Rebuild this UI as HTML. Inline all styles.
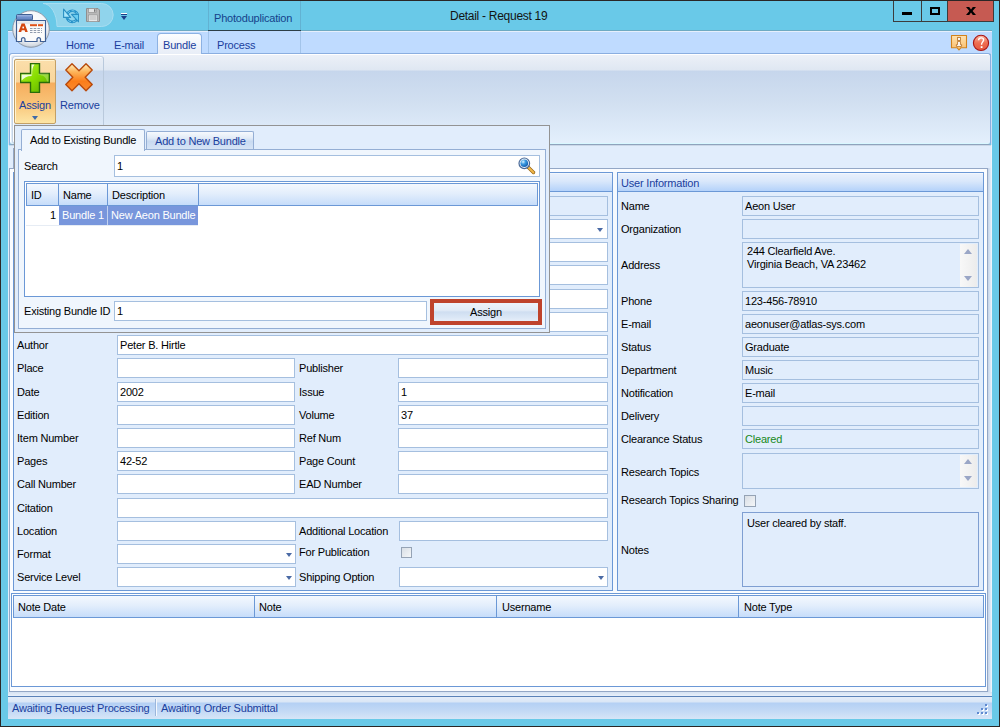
<!DOCTYPE html>
<html><head><meta charset="utf-8"><style>
*{box-sizing:border-box;margin:0;padding:0}
html,body{width:1000px;height:727px;overflow:hidden;background:#2a2626}
body{position:relative;font-family:"Liberation Sans",sans-serif;font-size:11px;letter-spacing:-0.2px;color:#000}
.a{position:absolute}
.t{position:absolute;white-space:nowrap;line-height:13px}
.bl{color:#1a3e9e}
.f{position:absolute;background:#fff;border:1px solid #a5bfdf}
.r{position:absolute;background:#e1edfc;border:1px solid #a5bfdf}
.dd{position:absolute;width:0;height:0;border-left:3.5px solid transparent;border-right:3.5px solid transparent;border-top:4px solid #4a6aa5}
.ck{position:absolute;width:11px;height:11px;border:1px solid #95a3b5;background:linear-gradient(135deg,#d9dfe6,#f4f6f8)}
.gh{position:absolute;background:linear-gradient(#f3f8fe,#dbe9fb 45%,#c0d9f9);border:1px solid #6b98d6}
</style></head><body>
<div class="a" style="left:1px;top:1px;width:998px;height:725px;background:#69c9e8"></div>
<div class="t" style="left:450px;top:10px;font-size:12px;letter-spacing:-0.28px;color:#141414">Detail - Request 19</div>
<div class="a" style="left:893px;top:1px;width:29px;height:21px;border:1px solid #3c3c3c;border-top:0;background:#69c9e8"></div>
<div class="a" style="left:922px;top:1px;width:26px;height:21px;border:1px solid #3c3c3c;border-top:0;border-left:0;background:#69c9e8"></div>
<div class="a" style="left:947px;top:1px;width:47px;height:21px;border:1px solid #3c3c3c;border-top:0;background:#c65a52"></div>
<div class="a" style="left:902px;top:12px;width:10px;height:3px;background:#000"></div>
<div class="a" style="left:930px;top:7px;width:10px;height:8px;border:2px solid #000"></div>
<svg class="a" style="left:966px;top:7px" width="10" height="8" viewBox="0 0 10 8"><path d="M0 0H3.2L5 2.6L6.8 0H10L6.6 4L10 8H6.8L5 5.4L3.2 8H0L3.4 4Z" fill="#000"/></svg>
<div class="a" style="left:8px;top:31px;width:984px;height:23px;background:#bfdbff"></div>
<div class="a" style="left:8px;top:30px;width:984px;height:1px;background:#6eaac2"></div>
<div class="a" style="left:8px;top:31px;width:984px;height:1px;background:#e6effc"></div>
<div class="a" style="left:208px;top:1px;width:93px;height:52px;background:linear-gradient(#69c9e8 0,#69c9e8 29px,#bfdbff 29px);border-left:1px solid #62b2d2;border-right:1px solid #62b2d2"></div>
<div class="a" style="left:208px;top:30px;width:93px;height:1px;background:#2c3f48"></div>
<div class="a" style="left:208px;top:31px;width:1px;height:22px;background:#a3c4ea"></div>
<div class="a" style="left:300px;top:31px;width:1px;height:22px;background:#a3c4ea"></div>
<div class="t" style="left:214px;top:12px;color:#15428b">Photoduplication</div>
<div class="t bl" style="left:66px;top:39px;">Home</div>
<div class="t bl" style="left:114px;top:39px;">E-mail</div>
<div class="t bl" style="left:217px;top:39px;">Process</div>
<div class="a" style="left:8px;top:53px;width:1px;height:92px;background:#cfe0f6"></div>
<div class="a" style="left:991px;top:53px;width:1px;height:92px;background:#cfe0f6"></div>
<div class="a" style="left:9px;top:53px;width:982px;height:92px;background:linear-gradient(#edf1f8 0,#dfe7f2 16px,#c6d6ec 17px,#d2e0f1 50px,#e3effc 88px);border:1px solid #8aaee0;border-bottom-color:#8ea3bd;border-radius:3px;box-shadow:inset 0 -1px 0 #d8f8ff,inset 1px 1px 0 #fff"></div>
<div class="a" style="left:157px;top:33px;width:45px;height:21px;background:linear-gradient(#fdfeff,#eef2f9 60%,#e8eef7);border:1px solid #8db2e3;border-bottom:0;border-radius:4px 4px 0 0"></div>
<div class="t bl" style="left:163px;top:39px;">Bundle</div>
<div class="a" style="left:12px;top:56px;width:92px;height:88px;border:1px solid #c4d3e4;border-right-color:#b9c9dc;border-radius:3px;box-shadow:inset 1px 1px 0 #fff"></div>
<div class="a" style="left:14px;top:59px;width:42px;height:65px;background:linear-gradient(#fbdeaa 0,#f9d69c 22px,#f6ad5e 23px,#f8c275 42px,#fde7a8 64px);border:1px solid #c3a066;border-radius:2px;box-shadow:inset 1px 1px 0 #fff3d0"></div>
<svg class="a" style="left:20px;top:63px" width="30" height="30" viewBox="0 0 30 30">
<defs><linearGradient id="pg" x1="0" y1="0" x2="1" y2="1"><stop offset="0" stop-color="#b8f030"/><stop offset="0.5" stop-color="#86dc00"/><stop offset="1" stop-color="#58a800"/></linearGradient></defs>
<path d="M10.5 0.5H19.5V10.5H29.5V19.5H19.5V29.5H10.5V19.5H0.5V10.5H10.5Z" fill="url(#pg)" stroke="#2a6c0a" stroke-width="1.4"/>
<path d="M11.6 1.6H14.5C12.5 4 12 8 12.2 11.6H11.6Z M1.6 11.6H11.6V13C7 13 4 15 1.6 17.5Z" fill="#fff" opacity="0.85"/><path d="M18.4 10.6H28.4V18.4H27 C26 14 23 12 18.4 12Z" fill="#fff" opacity="0.25"/>
</svg>
<svg class="a" style="left:65px;top:63px" width="28" height="29" viewBox="0 0 28 29">
<defs><linearGradient id="xg" x1="0" y1="0" x2="0" y2="1"><stop offset="0" stop-color="#fff1c0"/><stop offset="0.3" stop-color="#fdb45a"/><stop offset="0.65" stop-color="#fb7d1a"/><stop offset="1" stop-color="#f98a30"/></linearGradient></defs>
<path d="M7 0.8L14 7.8L21 0.8L27.2 7L20.2 14.2L27.2 21.4L21 27.8L14 20.8L7 27.8L0.8 21.4L7.8 14.2L0.8 7Z" fill="url(#xg)" stroke="#b84a0c" stroke-width="1.4" stroke-linejoin="round"/>
</svg>
<div class="t bl" style="left:19px;top:99px;">Assign</div>
<div class="t bl" style="left:60px;top:99px;">Remove</div>
<div class="dd" style="left:32px;top:116px;border-top-color:#3f6aa8"></div>
<div class="a" style="left:8px;top:145px;width:984px;height:574px;background:#e1edfc"></div>
<div class="a" style="left:991px;top:145px;width:1px;height:574px;background:#eef4fc"></div>
<div class="a" style="left:9px;top:145px;width:982px;height:1px;background:#cbd8e8"></div>
<svg class="a" style="left:950px;top:34px" width="18" height="17" viewBox="0 0 18 17">
<defs><linearGradient id="ig" x1="0" y1="0" x2="0" y2="1"><stop offset="0" stop-color="#ffe2b0"/><stop offset="1" stop-color="#f9bd6a"/></linearGradient></defs>
<path d="M1.5 1.5H16.5V13.7H11L9 16L7 13.7H1.5Z" fill="url(#ig)" stroke="#d2821c" stroke-width="1.1" stroke-linejoin="round"/>
<rect x="7.6" y="3.4" width="2.8" height="3" fill="#fff" stroke="#b8742a" stroke-width="0.9"/>
<path d="M7.6 7.4H10.4V10.6H11.6V12.4H6.4V10.6H7.6Z" fill="#fff" stroke="#b8742a" stroke-width="0.9"/>
</svg>
<svg class="a" style="left:972px;top:34px" width="18" height="18" viewBox="0 0 18 18">
<defs><linearGradient id="hg" x1="0" y1="0" x2="0" y2="1"><stop offset="0" stop-color="#fcb8a4"/><stop offset="0.5" stop-color="#ee6e52"/><stop offset="1" stop-color="#e4553c"/></linearGradient></defs>
<circle cx="9" cy="8.9" r="7.6" fill="url(#hg)" stroke="#a81414" stroke-width="1.1"/>
<path d="M6.6 6.3C6.6 4.6 7.7 3.9 9.2 3.9C10.7 3.9 11.6 4.8 11.6 6C11.6 7.6 9.6 8.2 9.6 10.2V10.8" fill="none" stroke="#fff" stroke-width="1.4"/>
<rect x="8.7" y="12.2" width="1.8" height="1.8" fill="#fff"/>
</svg>
<svg class="a" style="left:0;top:0" width="130" height="31" viewBox="0 0 130 31">
<path d="M43 3.5H101.7A11.5 11.5 0 0 1 101.7 26.5H57A14 23 0 0 0 43 3.5Z" fill="#90d4ec" stroke="#a6ddf1" stroke-width="1"/>
</svg>
<svg class="a" style="left:63px;top:8px" width="16" height="16" viewBox="0 0 16 16">
<defs><linearGradient id="rg" x1="0" y1="0" x2="1" y2="1"><stop offset="0" stop-color="#7fd6f6"/><stop offset="1" stop-color="#1a86c0"/></linearGradient></defs>
<circle cx="9.3" cy="8.3" r="5.6" fill="none" stroke="#2590c8" stroke-width="2.6"/>
<circle cx="9.3" cy="8.3" r="5.6" fill="none" stroke="#8edcf8" stroke-width="0.8" stroke-dasharray="3 2"/>
<path d="M0.6 1.2V9.4H7.6Z" fill="#a8e6fb" stroke="#2a90c4" stroke-width="1.1" stroke-linejoin="round"/>
<path d="M8.6 6.4H15.6V13.8Z" fill="#6acdf2" stroke="#2a90c4" stroke-width="1.1" stroke-linejoin="round"/>
</svg>
<svg class="a" style="left:86px;top:8px" width="14" height="14" viewBox="0 0 14 14">
<path d="M0.5 0.5H12L13.5 2V13.5H0.5Z" fill="#b9b9b9" stroke="#8f8f8f"/>
<rect x="2.5" y="0.5" width="8" height="4" fill="#e4e4e4" stroke="#8a8a8a" stroke-width="0.6"/>
<rect x="8" y="1.2" width="1.5" height="2.6" fill="#777"/>
<rect x="2.5" y="7" width="9" height="6.5" fill="#e8e8e8" stroke="#8f8f8f" stroke-width="0.6"/>
<path d="M3.5 9H10.5M3.5 11H10.5" stroke="#aaa" stroke-width="0.8"/>
</svg>
<div class="a" style="left:121px;top:13px;width:6px;height:1px;background:#fff"></div>
<div class="a" style="left:121px;top:14px;width:6px;height:1px;background:#1b3f8a"></div>
<div class="dd" style="left:121px;top:16px;border-top:4px solid #1b3f8a"></div>
<svg class="a" style="left:11px;top:9px" width="40" height="40" viewBox="0 0 40 40">
<defs><radialGradient id="ag" cx="0.5" cy="0.4" r="0.6"><stop offset="0" stop-color="#ffffff"/><stop offset="0.7" stop-color="#f4f6f9"/><stop offset="0.92" stop-color="#d4dae2"/><stop offset="1" stop-color="#b2bcc8"/></radialGradient>
<linearGradient id="tg" x1="0" y1="0" x2="0" y2="1"><stop offset="0" stop-color="#a8bde6"/><stop offset="0.5" stop-color="#7090cc"/><stop offset="1" stop-color="#6383c0"/></linearGradient></defs>
<circle cx="20" cy="20" r="18.3" fill="url(#ag)" stroke="#8f9bab" stroke-width="1"/>
<rect x="5.5" y="5.5" width="16" height="5.5" rx="1" fill="url(#tg)" stroke="#3e5f94" stroke-width="1"/>
<path d="M5.5 11.5H34.5V32.5H29.5V30A1.8 1.8 0 0 0 26 30V32.5H14V30A1.8 1.8 0 0 0 10.5 30V32.5H5.5Z" fill="#fbfbfb" stroke="#3e5f94" stroke-width="1.2"/>
<rect x="6.2" y="12.2" width="27.6" height="3" fill="#e6e9ee"/>
<path d="M7.5 23L10.6 14.6H13.6L16.8 23H14.2L13.6 21.2H10.8L10.2 23Z" fill="#d44812"/><rect x="11.4" y="17.6" width="1.6" height="1.8" fill="#fbfbfb"/>
<rect x="19" y="15.2" width="7" height="2" fill="#e05218"/><rect x="27" y="15.2" width="5" height="2" fill="#e05218"/>
<path d="M19 19.5H31M19 21.5H31M19 23.5H31" stroke="#8f9aac" stroke-width="1.1" stroke-dasharray="2.5 1.2"/>
</svg>
<div class="a" style="left:9px;top:168px;width:979px;height:524px;border:1px solid #93a7c6;background:#fafcff"></div>
<div class="a" style="left:988px;top:168px;width:3px;height:524px;background:linear-gradient(90deg,#c5d3e6,#e1edfc)"></div>
<div class="a" style="left:13px;top:148px;width:60px;height:21px;border:1px solid #93a7c6;border-bottom:0;background:linear-gradient(#fbfdff,#e9f1fb)"></div>
<div class="a" style="left:13px;top:172px;width:600px;height:419px;border:1px solid #6b98d6;background:#e1edfc"></div>
<div class="a" style="left:14px;top:173px;width:598px;height:19px;background:linear-gradient(#fdfeff 0,#e8f0fc 1px,#dae8fb 45%,#b4d2fa);border-bottom:1px solid #6b98d6"></div>
<div class="a" style="left:617px;top:172px;width:367px;height:419px;border:1px solid #6b98d6;background:#e1edfc"></div>
<div class="a" style="left:618px;top:173px;width:365px;height:19px;background:linear-gradient(#fdfeff 0,#e8f0fc 1px,#dae8fb 45%,#b4d2fa);border-bottom:1px solid #6b98d6"></div>
<div class="a" style="left:613px;top:172px;width:4px;height:419px;background:#f5f9fe"></div>
<div class="t bl" style="left:621px;top:177px;">User Information</div>
<div class="r" style="left:117px;top:196px;width:491px;height:20px"></div>
<div class="f" style="left:117px;top:219px;width:491px;height:20px"></div>
<div class="dd" style="left:597px;top:228px"></div>
<div class="f" style="left:117px;top:242px;width:491px;height:20px"></div>
<div class="f" style="left:117px;top:265px;width:491px;height:20px"></div>
<div class="f" style="left:117px;top:289px;width:491px;height:20px"></div>
<div class="f" style="left:117px;top:312px;width:491px;height:20px"></div>
<div class="t" style="left:17px;top:339px;">Author</div>
<div class="f" style="left:117px;top:335px;width:491px;height:20px"></div>
<div class="t" style="left:120px;top:339px;">Peter B. Hirtle</div>
<div class="t" style="left:17px;top:362px;">Place</div>
<div class="f" style="left:117px;top:358px;width:178px;height:20px"></div>
<div class="t" style="left:299px;top:362px;">Publisher</div>
<div class="f" style="left:398px;top:358px;width:210px;height:20px"></div>
<div class="t" style="left:17px;top:386px;">Date</div>
<div class="f" style="left:117px;top:382px;width:178px;height:20px"></div>
<div class="t" style="left:120px;top:386px;">2002</div>
<div class="t" style="left:299px;top:386px;">Issue</div>
<div class="f" style="left:398px;top:382px;width:210px;height:20px"></div>
<div class="t" style="left:401px;top:386px;">1</div>
<div class="t" style="left:17px;top:409px;">Edition</div>
<div class="f" style="left:117px;top:405px;width:178px;height:20px"></div>
<div class="t" style="left:299px;top:409px;">Volume</div>
<div class="f" style="left:398px;top:405px;width:210px;height:20px"></div>
<div class="t" style="left:401px;top:409px;">37</div>
<div class="t" style="left:17px;top:432px;">Item Number</div>
<div class="f" style="left:117px;top:428px;width:178px;height:20px"></div>
<div class="t" style="left:299px;top:432px;">Ref Num</div>
<div class="f" style="left:398px;top:428px;width:210px;height:20px"></div>
<div class="t" style="left:17px;top:455px;">Pages</div>
<div class="f" style="left:117px;top:451px;width:178px;height:20px"></div>
<div class="t" style="left:120px;top:455px;">42-52</div>
<div class="t" style="left:299px;top:455px;">Page Count</div>
<div class="f" style="left:398px;top:451px;width:210px;height:20px"></div>
<div class="t" style="left:17px;top:478px;">Call Number</div>
<div class="f" style="left:117px;top:474px;width:178px;height:20px"></div>
<div class="t" style="left:299px;top:478px;">EAD Number</div>
<div class="f" style="left:398px;top:474px;width:210px;height:20px"></div>
<div class="t" style="left:17px;top:502px;">Citation</div>
<div class="f" style="left:117px;top:498px;width:491px;height:20px"></div>
<div class="t" style="left:17px;top:525px;">Location</div>
<div class="f" style="left:117px;top:521px;width:179px;height:20px"></div>
<div class="t" style="left:299px;top:525px;">Additional Location</div>
<div class="f" style="left:399px;top:521px;width:209px;height:20px"></div>
<div class="t" style="left:17px;top:548px;">Format</div>
<div class="f" style="left:117px;top:544px;width:179px;height:20px"></div>
<div class="dd" style="left:286px;top:553px"></div>
<div class="t" style="left:299px;top:546px;">For Publication</div>
<div class="ck" style="left:401px;top:547px"></div>
<div class="t" style="left:17px;top:571px;">Service Level</div>
<div class="f" style="left:117px;top:567px;width:179px;height:20px"></div>
<div class="dd" style="left:286px;top:576px"></div>
<div class="t" style="left:299px;top:571px;">Shipping Option</div>
<div class="f" style="left:399px;top:567px;width:209px;height:20px"></div>
<div class="dd" style="left:598px;top:576px"></div>
<div class="t" style="left:621px;top:200px;">Name</div>
<div class="r" style="left:742px;top:196px;width:237px;height:20px"></div>
<div class="t" style="left:745px;top:200px;">Aeon User</div>
<div class="t" style="left:621px;top:223px;">Organization</div>
<div class="r" style="left:742px;top:219px;width:237px;height:20px"></div>
<div class="t" style="left:621px;top:259px;">Address</div>
<div class="r" style="left:742px;top:242px;width:237px;height:46px"></div>
<div class="t" style="left:747px;top:245px">244 Clearfield Ave.<br>Virginia Beach, VA 23462</div>
<div class="a" style="left:960px;top:244px;width:17px;height:43px;background:linear-gradient(90deg,#f8f8f8,#ececec)"></div>
<div class="a" style="left:964px;top:249px;width:0;height:0;border-left:4.5px solid transparent;border-right:4.5px solid transparent;border-bottom:5px solid #9aa6c6"></div>
<div class="a" style="left:964px;top:276px;width:0;height:0;border-left:4.5px solid transparent;border-right:4.5px solid transparent;border-top:5px solid #9aa6c6"></div>
<div class="t" style="left:621px;top:295px;">Phone</div>
<div class="r" style="left:742px;top:291px;width:237px;height:20px"></div>
<div class="t" style="left:745px;top:295px;">123-456-78910</div>
<div class="t" style="left:621px;top:318px;">E-mail</div>
<div class="r" style="left:742px;top:314px;width:237px;height:20px"></div>
<div class="t" style="left:745px;top:318px;">aeonuser@atlas-sys.com</div>
<div class="t" style="left:621px;top:341px;">Status</div>
<div class="r" style="left:742px;top:337px;width:237px;height:20px"></div>
<div class="t" style="left:745px;top:341px;">Graduate</div>
<div class="t" style="left:621px;top:364px;">Department</div>
<div class="r" style="left:742px;top:360px;width:237px;height:20px"></div>
<div class="t" style="left:745px;top:364px;">Music</div>
<div class="t" style="left:621px;top:387px;">Notification</div>
<div class="r" style="left:742px;top:383px;width:237px;height:20px"></div>
<div class="t" style="left:745px;top:387px;">E-mail</div>
<div class="t" style="left:621px;top:410px;">Delivery</div>
<div class="r" style="left:742px;top:406px;width:237px;height:20px"></div>
<div class="t" style="left:621px;top:433px;">Clearance Status</div>
<div class="r" style="left:742px;top:429px;width:237px;height:20px"></div>
<div class="t" style="left:745px;top:433px;color:#18891a">Cleared</div>
<div class="t" style="left:621px;top:466px;">Research Topics</div>
<div class="r" style="left:742px;top:453px;width:237px;height:36px"></div>
<div class="a" style="left:960px;top:455px;width:17px;height:32px;background:linear-gradient(90deg,#f8f8f8,#ececec)"></div>
<div class="a" style="left:964px;top:459px;width:0;height:0;border-left:4.5px solid transparent;border-right:4.5px solid transparent;border-bottom:5px solid #9aa6c6"></div>
<div class="a" style="left:964px;top:476px;width:0;height:0;border-left:4.5px solid transparent;border-right:4.5px solid transparent;border-top:5px solid #9aa6c6"></div>
<div class="t" style="left:621px;top:494px;">Research Topics Sharing</div>
<div class="ck" style="left:744px;top:495px;width:12px;height:12px"></div>
<div class="t" style="left:621px;top:544px;">Notes</div>
<div class="r" style="left:742px;top:512px;width:237px;height:75px;border-color:#7f9fd2"></div>
<div class="t" style="left:747px;top:517px;">User cleared by staff.</div>
<div class="a" style="left:11px;top:593px;width:975px;height:94px;background:#fff;border:1px solid #6b98d6"></div>
<div class="a" style="left:13px;top:595px;width:971px;height:23px;background:linear-gradient(#f4f8fe,#e3eefc 45%,#c6ddfa);border:1px solid #6b98d6"></div>
<div class="a" style="left:254px;top:596px;width:1px;height:21px;background:#6b98d6"></div>
<div class="a" style="left:496px;top:596px;width:1px;height:21px;background:#6b98d6"></div>
<div class="a" style="left:738px;top:596px;width:1px;height:21px;background:#6b98d6"></div>
<div class="t" style="left:18px;top:601px;">Note Date</div>
<div class="t" style="left:259px;top:601px;">Note</div>
<div class="t" style="left:502px;top:601px;">Username</div>
<div class="t" style="left:744px;top:601px;">Note Type</div>
<div class="a" style="left:8px;top:696px;width:984px;height:1px;background:#5a82b8"></div>
<div class="a" style="left:8px;top:692px;width:984px;height:4px;background:linear-gradient(#d5e2f2,#e8f0fa)"></div>
<div class="a" style="left:8px;top:697px;width:984px;height:22px;background:linear-gradient(#e4edf9 0,#dae6f6 5px,#b4d0f4 6px,#c3d9f5 14px,#d7e5f7 22px)"></div>
<div class="t bl" style="left:12px;top:702px;">Awaiting Request Processing</div>
<div class="a" style="left:155px;top:699px;width:1px;height:17px;background:#9bb6db"></div>
<div class="a" style="left:156px;top:699px;width:1px;height:17px;background:#f4f8fe"></div>
<div class="t bl" style="left:161px;top:702px;">Awaiting Order Submittal</div>
<div class="a" style="left:985px;top:704px;width:2px;height:2px;background:#5f8ad0;box-shadow:1px 1px 0 #fff"></div>
<div class="a" style="left:981px;top:708px;width:2px;height:2px;background:#5f8ad0;box-shadow:1px 1px 0 #fff"></div>
<div class="a" style="left:985px;top:708px;width:2px;height:2px;background:#5f8ad0;box-shadow:1px 1px 0 #fff"></div>
<div class="a" style="left:977px;top:712px;width:2px;height:2px;background:#5f8ad0;box-shadow:1px 1px 0 #fff"></div>
<div class="a" style="left:981px;top:712px;width:2px;height:2px;background:#5f8ad0;box-shadow:1px 1px 0 #fff"></div>
<div class="a" style="left:985px;top:712px;width:2px;height:2px;background:#5f8ad0;box-shadow:1px 1px 0 #fff"></div>
<div class="a" style="left:14px;top:125px;width:536px;height:208px;background:#e1edfc;border:1px solid #939393"></div>
<div class="a" style="left:18px;top:149px;width:528px;height:180px;background:#f0f6fd;border:1px solid #94aed4"></div>
<div class="a" style="left:146px;top:131px;width:108px;height:18px;background:linear-gradient(#f6f9fd,#e2ebf7 35%,#c8daf1 55%,#d6e4f6);border:1px solid #94aed4;border-bottom:0;border-radius:2px 2px 0 0"></div>
<div class="t bl" style="left:155px;top:135px;">Add to New Bundle</div>
<div class="a" style="left:21px;top:129px;width:124px;height:22px;background:#f0f6fd;border:1px solid #94aed4;border-bottom:0;border-radius:2px 2px 0 0"></div>
<div class="t" style="left:30px;top:134px;">Add to Existing Bundle</div>
<div class="t" style="left:24px;top:160px;">Search</div>
<div class="a" style="left:114px;top:155px;width:426px;height:22px;background:#fff;border:1px solid #a5bfdf"></div>
<div class="t" style="left:117px;top:160px;">1</div>
<svg class="a" style="left:518px;top:157px" width="18" height="18" viewBox="0 0 18 18">
<defs><radialGradient id="mg" cx="0.35" cy="0.3" r="0.7"><stop offset="0" stop-color="#d8f2ff"/><stop offset="0.45" stop-color="#3a9ae0"/><stop offset="1" stop-color="#1560b0"/></radialGradient></defs>
<path d="M10 10L15.5 15.5" stroke="#9a6a18" stroke-width="3.4" stroke-linecap="round"/>
<path d="M10 10L15.5 15.5" stroke="#f3b84a" stroke-width="1.8" stroke-linecap="round"/>
<circle cx="6.3" cy="6.3" r="5.3" fill="#eef4fb" stroke="#4a6a98" stroke-width="1.2"/>
<circle cx="6.3" cy="6.3" r="3.8" fill="url(#mg)"/>
</svg>
<div class="a" style="left:24px;top:181px;width:516px;height:116px;background:#fff;border:1px solid #6b98d6"></div>
<div class="a" style="left:26px;top:183px;width:512px;height:23px;background:linear-gradient(#f4f8fe,#e3eefc 45%,#c6ddfa);border:1px solid #6b98d6"></div>
<div class="a" style="left:58px;top:184px;width:1px;height:21px;background:#6b98d6"></div>
<div class="a" style="left:107px;top:184px;width:1px;height:21px;background:#6b98d6"></div>
<div class="a" style="left:198px;top:184px;width:1px;height:21px;background:#6b98d6"></div>
<div class="t" style="left:31px;top:189px;">ID</div>
<div class="t" style="left:63px;top:189px;">Name</div>
<div class="t" style="left:112px;top:189px;">Description</div>
<div class="a" style="left:59px;top:206px;width:139px;height:19px;background:#7896dc"></div>
<div class="a" style="left:107px;top:206px;width:1px;height:19px;background:#c2d2f0"></div>
<div class="a" style="left:26px;top:225px;width:172px;height:1px;background:#e6ecf4"></div>
<div class="t" style="left:50px;top:209px;">1</div>
<div class="t" style="left:62px;top:209px;color:#fff">Bundle 1</div>
<div class="t" style="left:111px;top:209px;color:#fff">New Aeon Bundle</div>
<div class="t" style="left:24px;top:305px;">Existing Bundle ID</div>
<div class="a" style="left:114px;top:301px;width:313px;height:20px;background:#fff;border:1px solid #a5bfdf"></div>
<div class="t" style="left:117px;top:305px;">1</div>
<div class="a" style="left:430px;top:299px;width:112px;height:26px;border:4px solid #bf432c"></div>
<div class="a" style="left:434px;top:303px;width:104px;height:18px;background:linear-gradient(#edf3fb,#e2ebf7 40%,#cfdef1 50%,#dbe7f6 80%,#e6eef9)"></div>
<div class="t" style="left:470px;top:306px;">Assign</div>
</body></html>
